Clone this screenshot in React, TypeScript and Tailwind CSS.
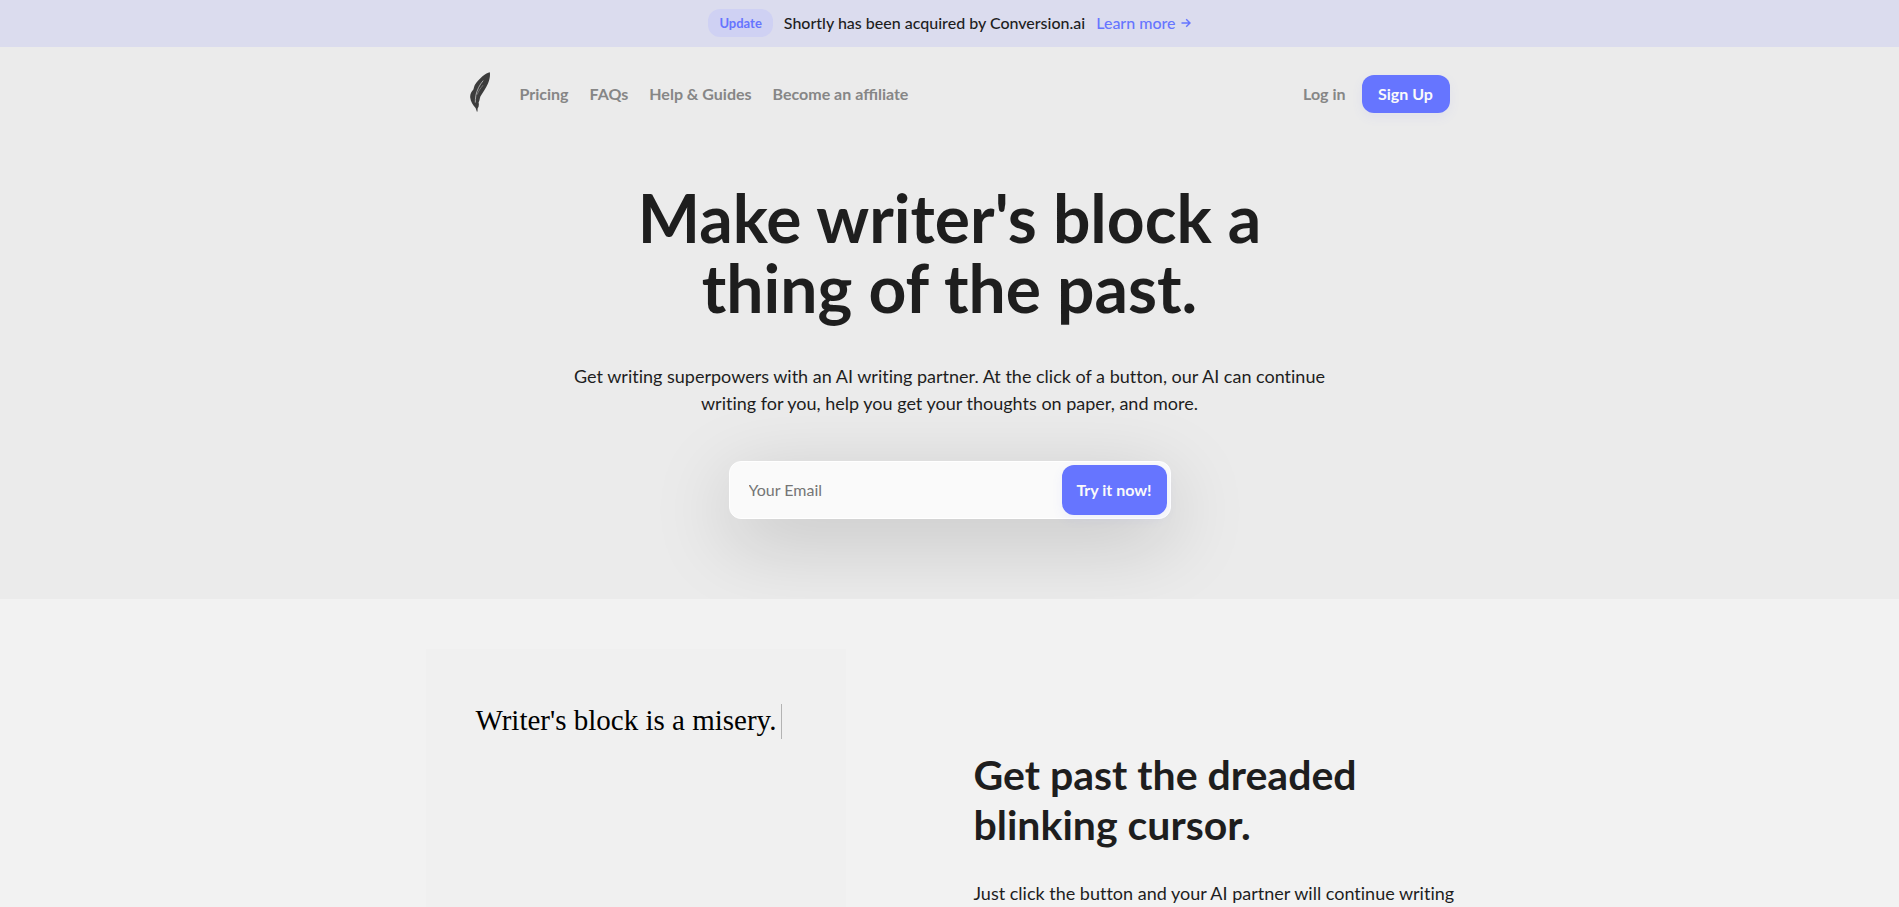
import type { ReactNode } from "react";

const navLinks = ["Pricing", "FAQs", "Help & Guides", "Become an affiliate"];

function FeatherLogo() {
  return (
    <svg viewBox="0 0 20 44" className="h-11 w-5" aria-hidden="true">
      <path
        d="M19.8 0.2C16 1 9.2 6 4.8 13C4 14.6 3.8 16.4 3.4 17.4C1 19.8 0 22.4 0.2 25.4C0.6 29.4 3 33.2 5.6 36L6.9 39.8L7.5 39.6L7.6 36.6C8.8 34.6 9.2 32.6 8.6 30.4C9.8 28.6 9.6 26.6 10.4 24.6C12.4 20.6 16 16.4 18 11.4C19.6 7.6 20.4 3.4 19.8 0.2Z"
        fill="#3c3c3c"
      />
      <path
        d="M13.2 8.6C9.4 13 7 18 5.8 23.6C5.3 26.4 5.4 28.6 5.3 30.6"
        fill="none"
        stroke="#c4c4c4"
        strokeWidth="0.8"
      />
      <path d="M13 13.2C10.6 16.2 8.4 19 7.2 22.6" fill="none" stroke="#9a9a9a" strokeWidth="0.6" />
    </svg>
  );
}

function ArrowIcon() {
  return (
    <svg viewBox="0 0 10 10" className="h-[10px] w-[10px]" fill="none" stroke="currentColor" strokeWidth="1.4" aria-hidden="true">
      <path d="M0.5 5H9M5.2 1.2L9 5L5.2 8.8" />
    </svg>
  );
}

function Banner() {
  return (
    <div className="flex h-[47px] items-center justify-center gap-[11px] bg-[#dbdcee] pb-px">
      <span className="rounded-xl bg-[#cfd1f3] px-[11px] py-1 text-[13px] leading-5 font-bold text-[#6675ff]">Update</span>
      <span className="text-base font-medium">Shortly has been acquired by Conversion.ai</span>
      <a href="#learn-more" className="flex items-center gap-[5px] text-base font-medium text-[#6675ff]">
        Learn more <ArrowIcon />
      </a>
    </div>
  );
}

function PrimaryButton({ children, className }: { children: ReactNode; className: string }) {
  return (
    <button
      type="button"
      className={`rounded-xl bg-[#6675ff] text-base font-bold text-[#fafafa] shadow-[0_4px_12px_rgba(102,117,255,0.08)] ${className}`}
    >
      {children}
    </button>
  );
}

export default function App() {
  return (
    <div className="min-h-screen bg-[#f2f2f2] font-['Lato',sans-serif] text-[#1e1e1e]">
      <Banner />
      <div className="overflow-hidden bg-[#ebebeb] pb-20">
        <header className="mx-auto flex h-[94px] max-w-[1000px] items-center pl-5">
          <a href="#home" aria-label="Shortly">
            <FeatherLogo />
          </a>
          <nav className="ml-[30px] flex gap-[21px] text-base font-bold text-[#868686]">
            {navLinks.map((label) => (
              <a key={label} href="#nav">
                {label}
              </a>
            ))}
          </nav>
          <a href="#login" className="ml-auto text-base font-bold text-[#868686]">
            Log in
          </a>
          <PrimaryButton className="ml-4 h-[38px] w-[88px]">Sign Up</PrimaryButton>
        </header>

        <main className="mx-auto flex max-w-[760px] flex-col items-center pt-[42px] text-center">
          <h1 className="max-w-[680px] text-[66px] leading-[70px] font-bold">Make writer's block a thing of the past.</h1>
          <p className="mt-10 text-lg leading-[27px] [font-variant-ligatures:none]">
            Get writing superpowers with an AI writing partner. At the click of a button, our AI can continue writing for
            you, help you get your thoughts on paper, and more.
          </p>
          <form className="mt-11 flex h-[58px] w-[442px] items-center rounded-xl border border-white bg-[#fafafa] pr-[3px] shadow-[0_20px_80px_rgba(0,0,0,0.18)]">
            <input
              type="email"
              aria-label="Your Email"
              placeholder="Your Email"
              className="h-full min-w-0 flex-1 rounded-xl bg-transparent pb-0.5 pl-[19px] text-base outline-none placeholder:text-[#757575]"
            />
            <PrimaryButton className="h-[50px] w-[105px]">Try it now!</PrimaryButton>
          </form>
        </main>
      </div>

      <section className="h-[308px] overflow-hidden">
        <div className="mx-auto grid max-w-[1048px] grid-cols-2 gap-x-6 pt-[50px]">
          <div className="h-[500px] w-[420px] bg-[#f0f0f0] px-[50px] pt-[55px]">
            <p className="flex items-start gap-[5px] font-['Liberation_Serif',serif] text-[29px] leading-8 text-black">
              Writer's block is a misery.
              <span className="h-[35px] w-px bg-[#b3b3b3]" />
            </p>
          </div>
          <div className="pt-[101px] pl-3">
            <h2 className="text-[41px] leading-[50px] font-bold">Get past the dreaded blinking cursor.</h2>
            <p className="mt-[30px] text-lg leading-[27px] [font-variant-ligatures:none]">
              Just click the button and your AI partner will continue writing
            </p>
          </div>
        </div>
      </section>
    </div>
  );
}
